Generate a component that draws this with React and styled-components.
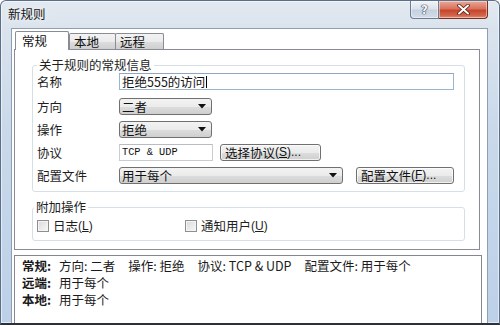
import React from 'react';
import styled, { createGlobalStyle } from 'styled-components';

const Global = createGlobalStyle`
  html, body { margin: 0; padding: 0; background: #ffffff; }
  body { font-family: "Noto Sans CJK SC", "Noto Sans", sans-serif; }
  * { box-sizing: border-box; }
`;

const FONT = `"Noto Sans CJK SC", "Noto Sans", sans-serif`;

const Window = styled.div`
  width: 500px;
  height: 325px;
  overflow: hidden;
  display: flex;
  flex-direction: column;
  border: 1px solid #5b6f88;
  border-bottom: 2px solid #2c3138;
  border-radius: 6px 6px 0 0;
  background: linear-gradient(180deg, #e3e9f0 0%, #dae3ed 9%, #c9d9ea 40%, #bcd0e8 100%);
  box-shadow: inset 0 0 0 1px rgba(255, 255, 255, 0.55);
  font-family: ${FONT};
  color: #1a1a1a;
`;

const TitleBar = styled.div`
  flex: none;
  height: 27px;
  display: flex;
  align-items: flex-start;
`;

const Title = styled.div`
  padding: 6px 0 0 7px;
  font-size: 12.5px;
  line-height: 14px;
  color: #161616;
  text-shadow: 0 0 6px rgba(255, 255, 255, 0.9);
`;

const Captions = styled.div`
  margin-left: auto;
  margin-right: 11px;
  display: flex;
`;

const CapButton = styled.div`
  width: ${(p) => p.$w}px;
  height: 18px;
  display: flex;
  align-items: center;
  justify-content: center;
  border: 1px solid ${(p) => (p.$close ? '#7b2d1f' : '#6a7d95')};
  border-top: none;
  border-left: ${(p) => (p.$close ? 'none' : undefined)};
  border-radius: ${(p) => (p.$close ? '0 0 4px 0' : '0 0 0 4px')};
  background: ${(p) =>
    p.$close
      ? 'linear-gradient(180deg, #e9a898 0%, #d9735c 45%, #c6452c 55%, #d2654a 85%, #e08a70 100%)'
      : 'linear-gradient(180deg, #f1f4f8 0%, #dbe3ec 45%, #c5d1df 55%, #d3dde9 100%)'};
  box-shadow: inset 0 0 0 1px rgba(255, 255, 255, 0.45);
`;

const HelpGlyph = styled.span`
  font-family: "DejaVu Sans", sans-serif;
  font-weight: 700;
  font-size: 12px;
  line-height: 12px;
  color: #f4f6f9;
  text-shadow: 0 0 1px #2f3a48, 0 0 1px #2f3a48, 0 0 1px #2f3a48;
`;

const Client = styled.div`
  flex: 1;
  min-height: 0;
  display: flex;
  flex-direction: column;
  margin: 0 11px 0 10px;
  background: #ffffff;
  border: 1px solid #8d9fb3;
  border-bottom: none;
`;

const TabRow = styled.div`
  position: relative;
  z-index: 1;
  flex: none;
  height: 21px;
  display: flex;
  align-items: flex-end;
  padding-left: 3px;
`;

const Tab = styled.div`
  width: ${(p) => p.$w}px;
  height: ${(p) => (p.$active ? 19 : 16)}px;
  margin-bottom: ${(p) => (p.$active ? 0 : 1)}px;
  margin-left: ${(p) => p.$ml || 0}px;
  padding-left: ${(p) => (p.$active ? 6 : 4)}px;
  border: 1px solid #898c95;
  border-bottom: none;
  border-radius: 2px 2px 0 0;
  background: ${(p) =>
    p.$active ? '#ffffff' : 'linear-gradient(180deg, #f3f3f3 0%, #ebebeb 50%, #dddddd 51%, #cfcfcf 100%)'};
  font-size: 12.5px;
  line-height: ${(p) => (p.$active ? 17 : 15)}px;
  color: #111;
`;

const Panel = styled.div`
  flex: none;
  height: 201px;
  margin: -1px 7px 0 2px;
  border: 1px solid #898c95;
  background: #ffffff;
  padding: 8px 14px 0 17px;
  display: flex;
  flex-direction: column;
  gap: 8px;
`;

const Group = styled.fieldset`
  margin: 0;
  min-width: 0;
  padding: ${(p) => p.$pad};
  border: 1px solid #d5dfe5;
  border-radius: 3px;
  box-shadow: inset 1px 1px 0 #ffffff;
`;

const Legend = styled.legend`
  padding: 0 2px;
  margin-left: ${(p) => p.$shift || 0}px;
  font-size: 12.5px;
  line-height: 14px;
  color: #1e1e1e;
`;

const Rows = styled.div`
  display: flex;
  flex-direction: column;
  gap: 6px;
`;

const Row = styled.div`
  display: flex;
  align-items: center;
  height: 17px;
  margin-bottom: ${(p) => p.$mb || 0}px;
`;

const Label = styled.div`
  flex: none;
  width: 82px;
  font-size: 12.5px;
  line-height: 17px;
  color: #1e1e1e;
`;

const TextBox = styled.div`
  flex: none;
  width: ${(p) => p.$w}px;
  height: 17px;
  display: flex;
  align-items: center;
  padding-left: 2px;
  border: 1px solid ${(p) => (p.$focus ? '#9db4cd' : '#c9cdd2')};
  border-top-color: ${(p) => (p.$focus ? '#8ea6c2' : '#b9bdc3')};
  background: #ffffff;
  font-size: 12.5px;
  line-height: 15px;
  color: #111;
`;

const MonoText = styled.span`
  font-family: "Liberation Mono", "DejaVu Sans Mono", monospace;
  font-size: 10.3px;
  letter-spacing: 0;
  color: #111;
`;

const Caret = styled.span`
  display: inline-block;
  width: 1px;
  height: 12px;
  margin-left: 1px;
  background: #000;
`;

const Combo = styled.div`
  flex: none;
  width: ${(p) => p.$w}px;
  height: 17px;
  display: flex;
  align-items: center;
  padding: 0 5px 0 2px;
  border: 1px solid #707070;
  border-radius: 3px;
  background: linear-gradient(180deg, #f3f3f3 0%, #ebebeb 50%, #dddddd 51%, #cfcfcf 100%);
  font-size: 12.5px;
  line-height: 15px;
  color: #111;
`;

const ComboText = styled.span`
  flex: 1;
`;

const Arrow = styled.svg`
  flex: none;
  width: 8px;
  height: 5px;
`;

const Button = styled.div`
  flex: none;
  width: ${(p) => p.$w}px;
  height: 17px;
  margin-left: ${(p) => p.$ml}px;
  display: flex;
  align-items: center;
  padding-left: 4px;
  border: 1px solid #707070;
  border-radius: 3px;
  background: linear-gradient(180deg, #f3f3f3 0%, #ebebeb 50%, #dddddd 51%, #cfcfcf 100%);
  box-shadow: inset 0 0 0 1px rgba(255, 255, 255, 0.7);
  font-size: 12.5px;
  line-height: 15px;
  color: #111;
  white-space: nowrap;
`;

const Check = styled.div`
  display: flex;
  align-items: center;
  width: ${(p) => p.$w || 'auto'};
  height: 14px;
  font-size: 12.5px;
  line-height: 14px;
  color: #1e1e1e;
  white-space: nowrap;
`;

const Box = styled.span`
  flex: none;
  width: 12px;
  height: 12px;
  margin-right: 4px;
  border: 1px solid #8f8f8f;
  background: linear-gradient(135deg, #d9d9d9 0%, #ececec 60%, #f7f7f7 100%);
  box-shadow: inset 0 0 0 1px #f4f4f4;
`;

const Latin = styled.span`
  font-family: "Liberation Sans", sans-serif;
  font-size: 12px;
`;

const Summary = styled.div`
  flex: 1;
  margin: 5px 5px 0 2px;
  padding: 1px 7px;
  border: 1px solid #828790;
  border-bottom: none;
  background: #ffffff;
  font-size: 12.5px;
  line-height: 17px;
  color: #1a1a1a;
`;

const SumLine = styled.div`
  display: flex;
  white-space: nowrap;
`;

const SumKey = styled.span`
  flex: none;
  width: 37px;
  font-weight: 700;
`;

const SumItem = styled.span`
  margin-right: 13px;
`;

const DropArrow = () => (
  <Arrow viewBox="0 0 8 5">
    <path d="M0 0 H8 L4 4.5 Z" fill="#111" />
  </Arrow>
);

const Mn = ({ k }) => (
  <Latin>
    (<u>{k}</u>)
  </Latin>
);

export default function App() {
  return (
    <>
      <Global />
      <Window>
        <TitleBar>
          <Title>新规则</Title>
          <Captions>
            <CapButton $w={29}>
              <HelpGlyph>?</HelpGlyph>
            </CapButton>
            <CapButton $w={49} $close>
              <svg width="13" height="11" viewBox="0 0 13 11">
                <path d="M2 1.5 L11 9.5 M11 1.5 L2 9.5" stroke="#5a1a10" strokeWidth="3.6" strokeLinecap="round" />
                <path d="M2 1.5 L11 9.5 M11 1.5 L2 9.5" stroke="#ffffff" strokeWidth="2" strokeLinecap="round" />
              </svg>
            </CapButton>
          </Captions>
        </TitleBar>
        <Client>
          <TabRow>
            <Tab $w={54} $active>常规</Tab>
            <Tab $w={47}>本地</Tab>
            <Tab $w={49} $ml={-1}>远程</Tab>
          </TabRow>
          <Panel>
            <Group $pad="1px 10px 7px 4px">
              <Legend>关于规则的常规信息</Legend>
              <Rows>
                <Row $mb={2}>
                  <Label>名称</Label>
                  <TextBox $w={335} $focus>
                    拒绝555的访问
                    <Caret />
                  </TextBox>
                </Row>
                <Row>
                  <Label>方向</Label>
                  <Combo $w={93}>
                    <ComboText>二者</ComboText>
                    <DropArrow />
                  </Combo>
                </Row>
                <Row>
                  <Label>操作</Label>
                  <Combo $w={93}>
                    <ComboText>拒绝</ComboText>
                    <DropArrow />
                  </Combo>
                </Row>
                <Row>
                  <Label>协议</Label>
                  <TextBox $w={94}>
                    <MonoText>TCP &amp; UDP</MonoText>
                  </TextBox>
                  <Button $w={101} $ml={7}>
                    选择协议<Latin>(<u>S</u>)...</Latin>
                  </Button>
                </Row>
                <Row>
                  <Label>配置文件</Label>
                  <Combo $w={224}>
                    <ComboText>用于每个</ComboText>
                    <DropArrow />
                  </Combo>
                  <Button $w={98} $ml={13}>
                    配置文件<Latin>(<u>F</u>)...</Latin>
                  </Button>
                </Row>
              </Rows>
            </Group>
            <Group $pad="3px 10px 6px 4px">
              <Legend $shift={-3}>附加操作</Legend>
              <Row>
                <Check $w="148px">
                  <Box />
                  日志<Mn k="L" />
                </Check>
                <Check>
                  <Box />
                  通知用户<Mn k="U" />
                </Check>
              </Row>
            </Group>
          </Panel>
          <Summary>
            <SumLine>
              <SumKey>常规:</SumKey>
              <SumItem>方向: 二者</SumItem>
              <SumItem>操作: 拒绝</SumItem>
              <SumItem>协议: TCP &amp; UDP</SumItem>
              <SumItem>配置文件: 用于每个</SumItem>
            </SumLine>
            <SumLine>
              <SumKey>远端:</SumKey>
              <span>用于每个</span>
            </SumLine>
            <SumLine>
              <SumKey>本地:</SumKey>
              <span>用于每个</span>
            </SumLine>
          </Summary>
        </Client>
      </Window>
    </>
  );
}
